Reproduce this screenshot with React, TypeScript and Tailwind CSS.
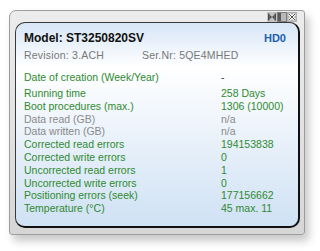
const rows: { label: string; value: string; grey?: boolean }[] = [
  { label: "Running time", value: "258 Days" },
  { label: "Boot procedures (max.)", value: "1306 (10000)" },
  { label: "Data read (GB)", value: "n/a", grey: true },
  { label: "Data written (GB)", value: "n/a", grey: true },
  { label: "Corrected read errors", value: "194153838" },
  { label: "Corrected write errors", value: "0" },
  { label: "Uncorrected read errors", value: "1" },
  { label: "Uncorrected write errors", value: "0" },
  { label: "Positioning errors (seek)", value: "177156662" },
  { label: "Temperature (°C)", value: "45 max. 11" },
];

const TitleButtons = () => (
  <div className="flex mr-[3px] mt-[1px]">
    <svg width="10" height="10" viewBox="0 0 10 10">
      <rect x="0" y="0" width="10" height="10" fill="#c4c4c4" />
      <path d="M1 1.5h1.5v7H1zM7.5 1.5H9v7H7.5z" fill="#4a4a4a" />
      <path d="M2.5 2.5L5 5L2.5 7.5zM7.5 2.5L5 5L7.5 7.5z" fill="#4a4a4a" />
    </svg>
    <svg width="10" height="10" viewBox="0 0 10 10">
      <rect x="0" y="0" width="10" height="10" fill="#7d7d7d" />
      <rect x="4" y="1" width="5" height="8" fill="#b9b9b9" />
      <rect x="1" y="1" width="3" height="8" fill="#5a5a5a" />
    </svg>
    <svg width="10" height="10" viewBox="0 0 10 10">
      <rect x="0" y="0" width="10" height="10" fill="#b0b0b0" />
      <path d="M2 2l6 6M8 2l-6 6" stroke="#fff" strokeWidth="2.6" />
      <path d="M2 2l6 6M8 2l-6 6" stroke="#3a3a3a" strokeWidth="0.9" />
    </svg>
  </div>
);

export default function App() {
  return (
    <div
      className="w-[320px] h-[251px] bg-white overflow-hidden"
      style={{ fontFamily: '"Liberation Sans", Arial, sans-serif' }}
    >
      <div className="ml-[9px] mt-[10px] w-[296px] h-[225px] rounded-tl-[7px] rounded-tr-[3px] rounded-b-[3px] border border-[#9d9d9d] bg-gradient-to-b from-[#ececec] via-[#e2e2e2] to-[#d6d6d6] shadow-[4px_6px_8px_rgba(0,0,0,0.22)] flex flex-col pl-[5px] pr-[4px] pb-[6px]">
        <div className="h-[11px] flex justify-end items-start">
          <TitleButtons />
        </div>
        <div className="flex-1 rounded-[10px] border border-[#3a3a3a] border-b-2 border-r-2 border-b-[#111] border-r-[#111] bg-gradient-to-b from-[#d7e6f6] via-white via-[22%] to-[#cfe1f4] px-[8px] pt-[8px] relative">
          <div className="flex items-baseline justify-between h-[15px] pr-[4px]">
            <span className="text-[12px] font-bold text-[#111] leading-[15px]">Model: ST3250820SV</span>
            <span className="text-[11px] font-bold text-[#2160b0] leading-[15px]">HD0</span>
          </div>
          <div className="flex mt-[3px] h-[13px] text-[10.5px] leading-[13px] text-[#777]">
            <span className="w-[118px] tracking-[0.2px]">Revision: 3.ACH</span>
            <span className="tracking-[0.2px]">Ser.Nr: 5QE4MHED</span>
          </div>
          <div className="flex mt-[9px] h-[13px] text-[10.5px] leading-[13px]">
            <span className="w-[197px] text-[#2f8a2f]">Date of creation (Week/Year)</span>
            <span className="text-[#333]">-</span>
          </div>
          <div className="mt-[3px] flex flex-col">
            {rows.map((r) => (
              <div key={r.label} className="flex h-[12.8px] text-[10.5px] leading-[12.8px]">
                <span className={`w-[197px] ${r.grey ? "text-[#8a8a8a]" : "text-[#2f8a2f]"}`}>{r.label}</span>
                <span className={r.grey ? "text-[#8a8a8a]" : "text-[#2f8a2f]"}>{r.value}</span>
              </div>
            ))}
          </div>
        </div>
      </div>
    </div>
  );
}
